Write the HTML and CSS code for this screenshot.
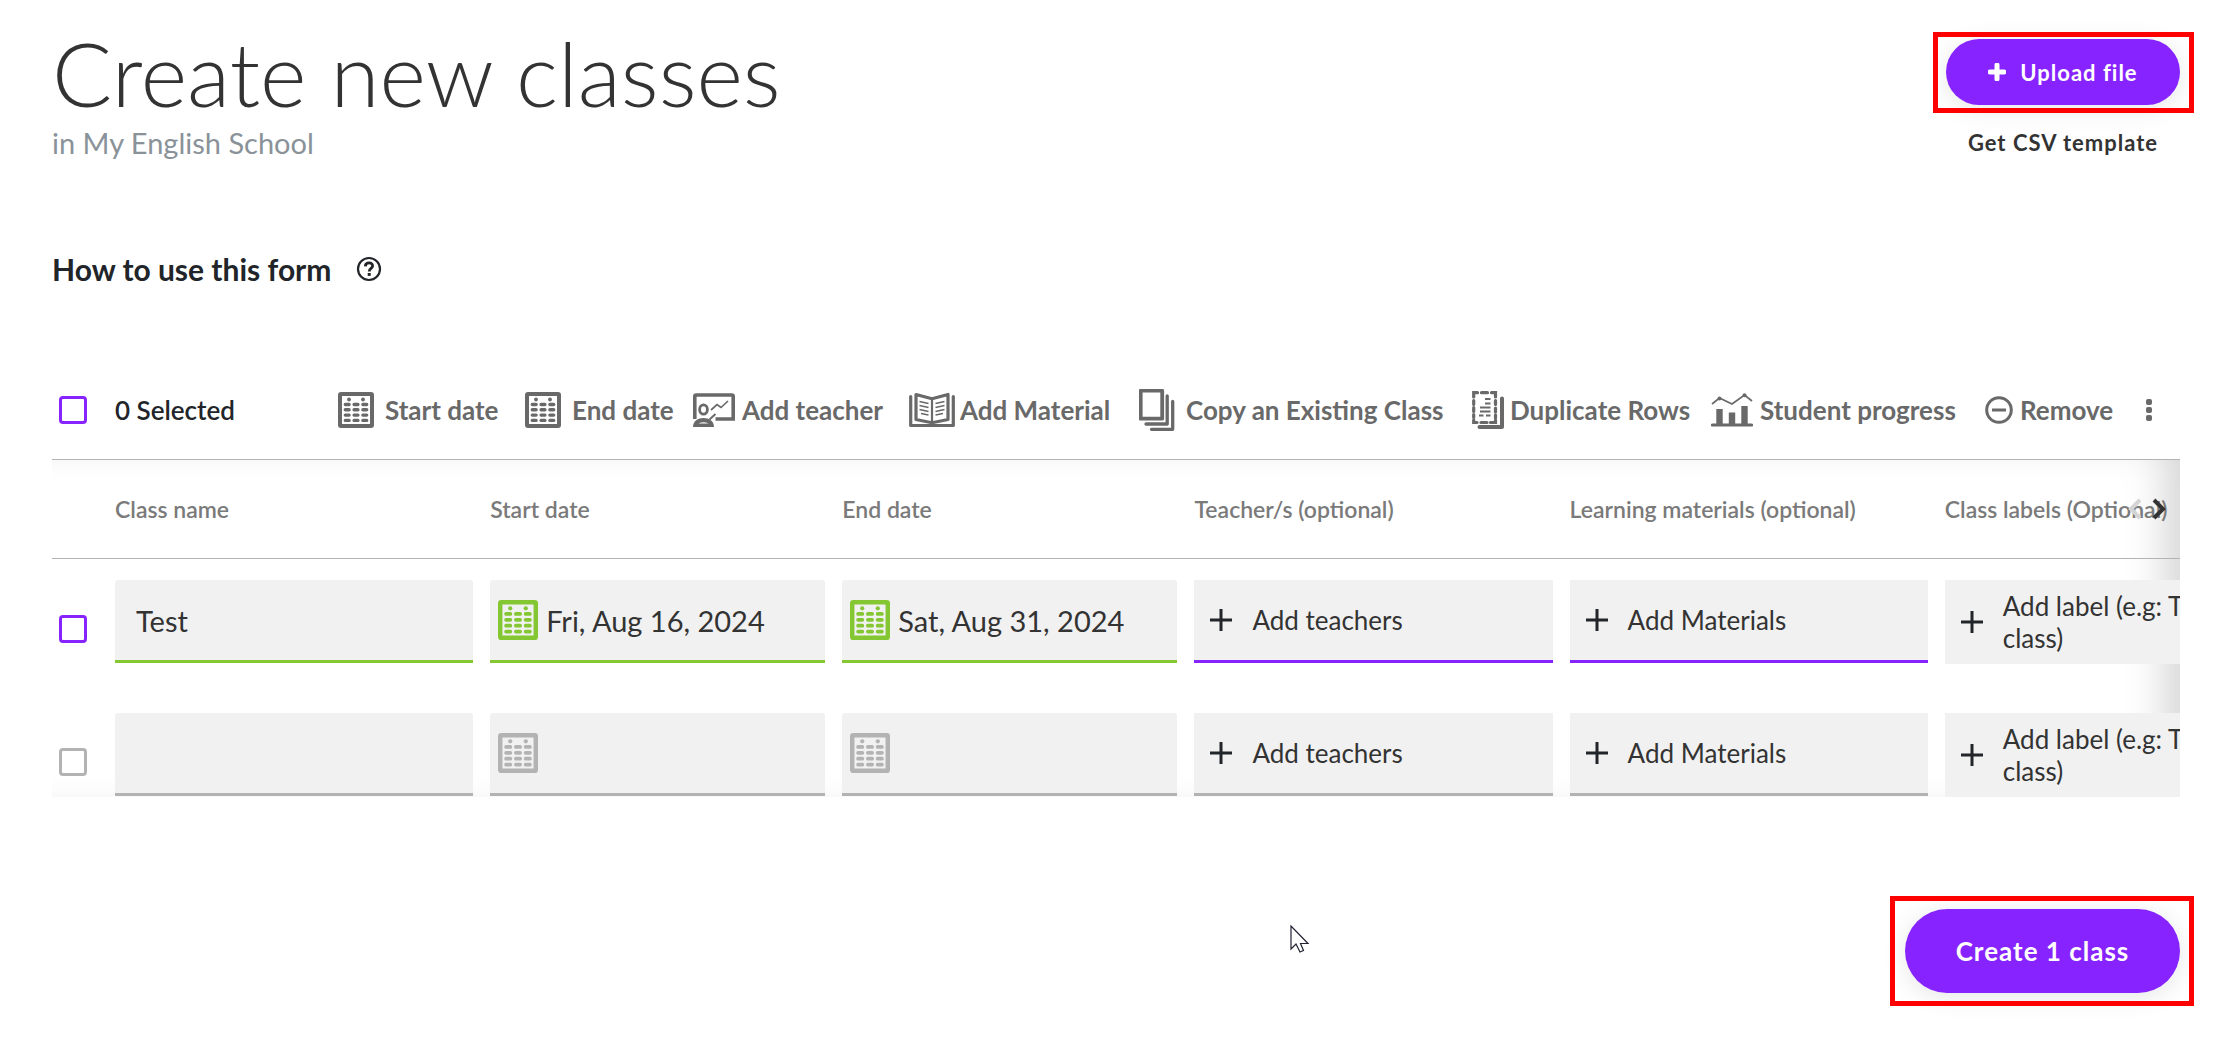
FILE: index.html
```html
<!DOCTYPE html>
<html lang="en">
<head>
<meta charset="utf-8">
<meta name="viewport" content="width=device-width, initial-scale=1">
<title>Create new classes</title>
<link rel="stylesheet" href="styles.css">
</head>
<body>
<svg class="sprite" aria-hidden="true">
  <symbol id="calendar" viewBox="0 0 36 36">
    <rect x="2" y="2" width="32" height="32" rx="1" fill="none" stroke="currentColor" stroke-width="4"/>
    <g fill="currentColor"><circle cx="11" cy="7.5" r="1.9"/><circle cx="25" cy="7.5" r="1.9"/></g>
    <path d="M7.3 12.5h3.8M16.1 12.5h3.8M24.9 12.5h3.8M7.3 17.8h3.8M16.1 17.8h3.8M24.9 17.8h3.8M7.3 23.1h3.8M16.1 23.1h3.8M24.9 23.1h3.8M7.3 28.4h3.8M16.1 28.4h3.8M24.9 28.4h3.8" stroke="currentColor" stroke-width="3.4" stroke-linecap="round"/>
  </symbol>
  <symbol id="plus" viewBox="0 0 22 22">
    <path d="M11 0v22M0 11h22" stroke="currentColor" stroke-width="3"/>
  </symbol>
</svg>

<main class="page">
  <header class="page-header">
    <div class="heading">
      <h1 class="title">Create new classes</h1>
      <p class="subtitle">in My English School</p>
    </div>
    <div class="header-actions">
      <div class="highlighted">
        <button type="button" class="button">
          <svg class="button-icon" viewBox="0 0 18 18" aria-hidden="true"><path d="M9 2v14M2 9h14" stroke="currentColor" stroke-width="5" stroke-linecap="round"/></svg>
          Upload file
        </button>
        <span class="highlight highlight-upload"></span>
      </div>
      <a class="template-link" href="#">Get CSV template</a>
    </div>
  </header>

  <section class="help">
    <h2 class="help-title">How to use this form</h2>
    <button type="button" class="icon-button" aria-label="Help">
      <svg width="26" height="26" viewBox="0 0 26 26" fill="none" stroke="currentColor" aria-hidden="true"><circle cx="13" cy="13" r="11" stroke-width="2.2"/><path d="M9.3 10.3C9.6 5.700 17 6 16.600 10.200C16.400 12.400 13.200 12.600 13.200 15.500" stroke-width="2.800"/><path d="M13.200 17v2.900" stroke-width="3"/></svg>
    </button>
  </section>

  <div class="toolbar">
    <label class="selection"><input type="checkbox" class="checkbox"><span>0 Selected</span></label>
    <div class="tools">
      <button type="button" class="tool tool-spaced"><svg width="36" height="36"><use href="#calendar"/></svg>Start date</button>
      <button type="button" class="tool tool-spaced"><svg width="36" height="36"><use href="#calendar"/></svg>End date</button>
      <button type="button" class="tool"><svg width="42" height="34" viewBox="0 0 42 34" fill="none" stroke="currentColor"><path d="M1.800 26V3.500Q1.800 2 3.300 2H38.700Q40.200 2 40.200 3.500V26H22.500" stroke-width="3.600"/><ellipse cx="10.500" cy="16.500" rx="3.900" ry="4.600" stroke-width="2.800"/><path d="M0 34C0 28 5 25 10.500 25S21 28 21 34Z" fill="currentColor" stroke="none"/><path d="M5.500 30.500Q10.500 28 15.500 30.500Z" fill="#fff" stroke="none"/><path d="M16.500 26.500L22.500 21" stroke-width="2"/><path d="M18 17L24 11.500L28 14.500L35 8" stroke-width="1.700"/></svg>Add teacher</button>
      <button type="button" class="tool tool-close"><svg width="46" height="36" viewBox="0 0 46 36" fill="none" stroke="currentColor"><path d="M1.700 4.500V33.500H44.300V4.500" stroke-width="3.200" stroke-linejoin="round" stroke-linecap="round"/><path d="M7 2.500L23 6.800L39 2.500V27.500L23 30.700L7 27.500Z" stroke-width="3.200" stroke-linejoin="round"/><path d="M23 7V31" stroke-width="2.200"/><path d="M10.500 9.500l9 2M10.500 13.500l9 2M10.500 17.500l9 2M12 21.500l7.500 1.500M35.500 9.500l-9 2M35.500 13.500l-9 2M35.500 17.500l-9 2M34 21.500l-7.500 1.500" stroke-width="1.500"/></svg>Add Material</button>
      <button type="button" class="tool tool-spaced"><svg width="36" height="42" viewBox="0 0 36 42" fill="none" stroke="currentColor" stroke-linecap="round" stroke-linejoin="round"><rect x="1.700" y="1.700" width="21.500" height="28" stroke-width="3.800"/><path d="M28.200 7V35H7M33.700 12.500V40.300H12.500" stroke-width="3.300"/></svg>Copy an Existing Class</button>
      <button type="button" class="tool tool-tight"><svg width="33" height="38" viewBox="0 0 33 38" fill="none" stroke="currentColor"><path d="M1.700 6V1.700H5.500M9.500 1.700h6M19.500 1.700H23.500V6M23.500 9.500v4M23.500 17v4M23.500 24v3M1.700 9.500v4M1.700 16.500v4M1.700 23.500v3M1.700 29V31.500H5M9 31.500h6M18.500 31.500H23.500V29" stroke-width="3.200" stroke-linecap="round"/><path d="M13 8h5.500M13 12.500h5.500M8 16.500h10.500M8 20.500h10.500M7 24.500h4.500M14 24.500h4.500" stroke-width="1.800"/><path d="M30 7.500V36H7.500" stroke-width="4" stroke-linecap="round" stroke-linejoin="round"/></svg>Duplicate Rows</button>
      <button type="button" class="tool"><svg width="42" height="34" viewBox="0 0 42 34" fill="none" stroke="currentColor"><path d="M1.500 32H40.500" stroke-width="3.200" stroke-linecap="round"/><path d="M8.500 16V32M21 19.500V32M33.500 13V32" stroke-width="6.400"/><path d="M1 11L8.500 5L21 11L33.500 2L41 8" stroke-width="1.700"/><g fill="currentColor" stroke="none"><circle cx="8.500" cy="5.500" r="2"/><circle cx="33.500" cy="2.300" r="2"/></g></svg>Student progress</button>
      <button type="button" class="tool"><svg width="28" height="28" viewBox="0 0 28 28" fill="none" stroke="currentColor" stroke-width="3"><circle cx="14" cy="14" r="12.300"/><path d="M7 14h14"/></svg>Remove</button>
      <button type="button" class="icon-button more" aria-label="More actions"><svg width="8" height="24" viewBox="0 0 8 24" fill="currentColor"><rect x="1" y="1" width="6" height="6" rx="2"/><rect x="1" y="9" width="6" height="6" rx="2"/><rect x="1" y="17" width="6" height="6" rx="2"/></svg></button>
    </div>
  </div>

  <div class="grid-wrap">
    <div class="grid-scroll">
      <table class="classes">
        <colgroup><col class="col-check"><col class="col-wide"><col class="col-date"><col class="col-date"><col class="col-wide"><col class="col-wide"><col class="col-wide"></colgroup>
        <thead>
          <tr><td></td><th scope="col">Class name</th><th scope="col">Start date</th><th scope="col">End date</th><th scope="col">Teacher/s (optional)</th><th scope="col">Learning materials (optional)</th><th scope="col">Class labels (Optional)</th></tr>
        </thead>
        <tbody>
          <tr class="filled">
            <td><input type="checkbox" class="checkbox row-check" aria-label="Select row 1"></td>
            <td><input type="text" class="field name" aria-label="Class name" value="Test"></td>
            <td><label class="field date"><svg width="40" height="40"><use href="#calendar"/></svg><input type="text" class="date-input" aria-label="Start date" value="Fri, Aug 16, 2024"></label></td>
            <td><label class="field date"><svg width="40" height="40"><use href="#calendar"/></svg><input type="text" class="date-input" aria-label="End date" value="Sat, Aug 31, 2024"></label></td>
            <td><button type="button" class="field add"><svg class="plus"><use href="#plus"/></svg>Add teachers</button></td>
            <td><button type="button" class="field add"><svg class="plus"><use href="#plus"/></svg>Add Materials</button></td>
            <td><button type="button" class="field add add-label"><svg class="plus"><use href="#plus"/></svg><span>Add label (e.g: Test<br>class)</span></button></td>
          </tr>
          <tr>
            <td><input type="checkbox" class="checkbox row-check muted" aria-label="Select row 2"></td>
            <td><input type="text" class="field name" aria-label="Class name"></td>
            <td><label class="field date"><svg width="40" height="40"><use href="#calendar"/></svg><input type="text" class="date-input" aria-label="Start date"></label></td>
            <td><label class="field date"><svg width="40" height="40"><use href="#calendar"/></svg><input type="text" class="date-input" aria-label="End date"></label></td>
            <td><button type="button" class="field add"><svg class="plus"><use href="#plus"/></svg>Add teachers</button></td>
            <td><button type="button" class="field add"><svg class="plus"><use href="#plus"/></svg>Add Materials</button></td>
            <td><button type="button" class="field add add-label"><svg class="plus"><use href="#plus"/></svg><span>Add label (e.g: Test<br>class)</span></button></td>
          </tr>
        </tbody>
      </table>
    </div>
    <div class="pager">
      <button type="button" class="icon-button pager-prev" aria-label="Previous columns"><svg width="14" height="22" viewBox="0 0 14 22" fill="none" stroke="currentColor" stroke-width="4"><path d="M12 2L3 11L12 20"/></svg></button>
      <button type="button" class="icon-button pager-next" aria-label="Next columns"><svg width="14" height="22" viewBox="0 0 14 22" fill="none" stroke="currentColor" stroke-width="4"><path d="M2 2L11 11L2 20"/></svg></button>
    </div>
  </div>

  <footer class="page-footer">
    <div class="highlighted">
      <button type="button" class="button button-large">Create 1 class</button>
      <span class="highlight highlight-create"></span>
    </div>
  </footer>

  <svg class="cursor" width="20" height="30" viewBox="0 0 20 30" aria-hidden="true"><path d="M1 1V24L6 19L10 27L13.500 25.500L10.500 18.500H18Z" fill="#fff" stroke="#223" stroke-width="1.200"/></svg>
</main>
</body>
</html>
```
FILE: styles.css
```css
* { box-sizing: border-box; }

body {
  margin: 0;
  background: #fff;
  color: #212529;
  font-family: Lato, "Open Sans", sans-serif;
  font-size: 26px;
}

h1, h2, p { margin: 0; }

button, input {
  margin: 0;
  padding: 0;
  border: 0;
  background: none;
  color: inherit;
  font: inherit;
}

svg { flex: none; }
.sprite { position: absolute; width: 0; height: 0; }

.page {
  position: relative;
  padding: 24px 44px 55px 52px;
}

.page-header {
  display: flex;
  justify-content: space-between;
}

.title {
  color: #333;
  font-size: 89px;
  font-weight: 300;
  line-height: 98px;
}

.subtitle {
  margin-top: 3px;
  color: #8a9299;
  font-size: 29px;
  line-height: 36px;
}

.header-actions {
  display: flex;
  flex-direction: column;
  align-items: center;
  gap: 24px;
  padding-top: 15px;
}

.button {
  display: flex;
  align-items: center;
  justify-content: center;
  gap: 14px;
  min-width: 234px;
  height: 66px;
  border-radius: 42px;
  background: #8723ff;
  box-shadow: 0 4px 24px rgba(0, 0, 0, 0.1);
  color: #fff;
  font-size: 22px;
  font-weight: 700;
  letter-spacing: 1px;
}

.button-large {
  min-width: 275px;
  height: 84px;
  font-size: 26px;
}

.button-icon { width: 18px; height: 18px; }

.highlighted { position: relative; }

.highlight {
  position: absolute;
  border: 5px solid #f00;
  pointer-events: none;
}

.highlight-upload { inset: -7px -14px -8px -13px; }
.highlight-create { inset: -13px -14px -13px -15px; }

.template-link {
  color: #333;
  font-size: 22px;
  font-weight: 700;
  letter-spacing: 1px;
  line-height: 28px;
  text-decoration: none;
}

.help {
  display: flex;
  align-items: center;
  gap: 25px;
  margin-top: 90px;
}

.help-title {
  font-size: 30px;
  font-weight: 700;
  line-height: 36px;
}

.icon-button { display: flex; }

.toolbar {
  display: flex;
  align-items: center;
  height: 99px;
  margin-top: 74px;
  border-bottom: 1px solid #b3b3b3;
}

.selection {
  display: flex;
  align-items: center;
  gap: 28px;
  width: 286px;
  padding-left: 7px;
  font-weight: 600;
}

.checkbox {
  appearance: none;
  width: 28px;
  height: 28px;
  border: 3px solid #8723ff;
  border-radius: 4px;
  background: #fff;
}

.checkbox.muted { border-color: #b3b3b3; }

.tools {
  display: grid;
  flex: 1;
  grid-template-columns: 187fr 168fr 216fr 230fr 333fr 239fr 274fr 160fr 35fr;
  align-items: center;
  color: #696969;
}

.tool {
  display: flex;
  align-items: center;
  gap: 7px;
  font-weight: 700;
  white-space: nowrap;
}

.tool-spaced { gap: 11px; }
.tool-close { gap: 5px; }
.tool-tight { gap: 5px; }

.grid-wrap { position: relative; }

.grid-scroll {
  overflow: hidden;
  box-shadow: inset -35px 0 40px -20px rgba(0, 0, 0, 0.17);
}

.classes {
  width: 2268px;
  border-collapse: separate;
  border-spacing: 0;
  table-layout: fixed;
}

.col-check { width: 63px; }
.col-wide { width: 375px; }
.col-date { width: 352px; }

.classes td,
.classes th {
  padding: 21px 17px 28px 0;
  text-align: left;
  vertical-align: top;
}

.classes thead td,
.classes thead th {
  height: 99px;
  padding: 0;
  border-bottom: 1px solid #b3b3b3;
  color: #7a7a7a;
  font-size: 23px;
  font-weight: 600;
  vertical-align: middle;
}

.classes tbody tr:last-child td { padding-bottom: 0; }

.row-check {
  display: block;
  margin: 35px 0 0 7px;
}

.field {
  display: flex;
  align-items: center;
  width: 100%;
  height: 83px;
  border-bottom: 3px solid #b3b3b3;
  border-radius: 3px 3px 0 0;
  background: #f1f1f1;
  color: #333;
  text-align: left;
}

.name {
  padding-left: 21px;
  font-size: 29px;
}

.date {
  gap: 8px;
  padding-left: 8px;
  color: #b3b3b3;
}

.date-input {
  flex: 1;
  min-width: 0;
  color: #333;
  font-size: 29px;
}

.add {
  gap: 20px;
  padding-left: 16px;
  border-radius: 0;
}

.plus {
  width: 22px;
  height: 22px;
  color: #212529;
}

.add-label {
  height: 84px;
  border-bottom: 0;
  line-height: 32px;
  white-space: nowrap;
}

.filled .name,
.filled .date { border-bottom-color: #84c733; }
.filled .date { color: #84c733; }
.filled .add { border-bottom-color: #8723ff; }

.pager {
  position: absolute;
  top: 38px;
  right: 14px;
  display: flex;
  gap: 10px;
}

.pager-prev { color: #d4d4d4; }
.pager-next { color: #333; }

.page-footer {
  display: flex;
  justify-content: flex-end;
  margin-top: 112px;
}

.cursor {
  position: absolute;
  top: 925px;
  left: 58%;
}
```
